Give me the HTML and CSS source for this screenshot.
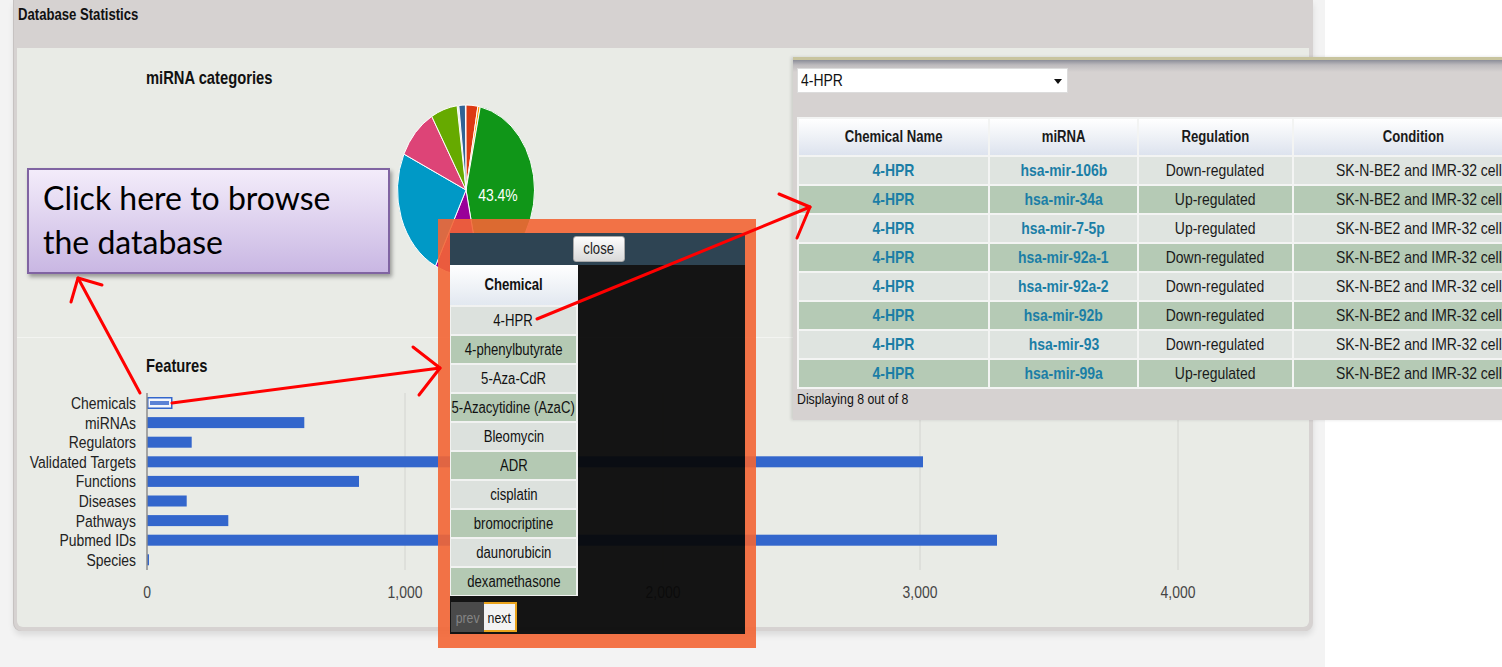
FILE: index.html
```html
<!DOCTYPE html>
<html>
<head>
<meta charset="utf-8">
<title>Database Statistics</title>
<link rel="stylesheet" href="styles.css">
</head>
<body>
<div class="page">
  <div class="panel">
    <div class="panel-head"><span class="sq sq-l">Database Statistics</span></div>
    <div class="panel-body">
      <div class="chart chart-pie">
        <svg class="chart-svg" width="1292" height="290" viewBox="0 0 1292 290">
          <text class="chart-title" x="129" y="36">miRNA categories</text>
          <g class="pie" transform="translate(449 142) scale(0.806 1)">
            <path fill="#dc3912" d="M0,0 L0,-85 A85,85 0 0 1 14.76,-83.71 Z"/>
            <path fill="#ff9900" d="M0,0 L14.76,-83.71 A85,85 0 0 1 17.67,-83.14 Z"/>
            <path fill="#109618" d="M0,0 L17.67,-83.14 A85,85 0 0 1 17.38,83.21 Z"/>
            <path fill="#990099" d="M0,0 L17.38,83.21 A85,85 0 0 1 -37.93,76.07 Z"/>
            <path fill="#0099c6" d="M0,0 L-37.93,76.07 A85,85 0 0 1 -77.04,-35.92 Z"/>
            <path fill="#dd4477" d="M0,0 L-77.04,-35.92 A85,85 0 0 1 -42.5,-73.61 Z"/>
            <path fill="#66aa00" d="M0,0 L-42.5,-73.61 A85,85 0 0 1 -11.09,-84.27 Z"/>
            <path fill="#316395" d="M0,0 L-8.88,-84.53 A85,85 0 0 1 -0.74,-85 Z"/>
          </g>
          <text class="pie-label" x="481" y="153">43.4%</text>
        </svg>
      </div>
      <div class="chart chart-bars">
        <svg class="chart-svg" width="1292" height="288" viewBox="0 0 1292 288">
          <text class="chart-title" x="129" y="34">Features</text>
          <g class="grid">
            <line x1="388" y1="55" x2="388" y2="232"/>
            <line x1="646" y1="55" x2="646" y2="232"/>
            <line x1="903" y1="55" x2="903" y2="232"/>
            <line x1="1161" y1="55" x2="1161" y2="232"/>
          </g>
          <g class="bars">
            <rect class="bar-hl" x="130.75" y="59.75" width="24" height="10.5"/>
            <rect class="bar-hl-in" x="133" y="63" width="19" height="4"/>
            <rect x="130" y="79.1" width="157.3" height="11"/>
            <rect x="130" y="98.7" width="44.7" height="11"/>
            <rect x="130" y="118.3" width="776" height="11"/>
            <rect x="130" y="137.9" width="212" height="11"/>
            <rect x="130" y="157.5" width="39.7" height="11"/>
            <rect x="130" y="177.1" width="81.3" height="11"/>
            <rect x="130" y="196.7" width="850" height="11"/>
            <rect x="130" y="216.3" width="2" height="11"/>
          </g>
          <line class="axis" x1="130" y1="55" x2="130" y2="232"/>
          <g class="labels">
            <text x="119" y="71">Chemicals</text>
            <text x="119" y="90.6">miRNAs</text>
            <text x="119" y="110.2">Regulators</text>
            <text x="119" y="129.8">Validated Targets</text>
            <text x="119" y="149.4">Functions</text>
            <text x="119" y="169">Diseases</text>
            <text x="119" y="188.6">Pathways</text>
            <text x="119" y="208.2">Pubmed IDs</text>
            <text x="119" y="227.8">Species</text>
          </g>
          <g class="ticks">
            <text x="130" y="260">0</text>
            <text x="388" y="260">1,000</text>
            <text x="646" y="260">2,000</text>
            <text x="903" y="260">3,000</text>
            <text x="1161" y="260">4,000</text>
          </g>
        </svg>
      </div>
    </div>
  </div>
</div>

<div class="callout">Click here to browse the database</div>

<div class="result">
  <div class="select"><span class="sq sq-l">4-HPR</span><span class="caret"></span></div>
  <table class="result-table">
    <thead>
      <tr><th class="c1"><span class="sq">Chemical Name</span></th><th class="c2"><span class="sq">miRNA</span></th><th class="c3"><span class="sq">Regulation</span></th><th class="c4"><span class="sq">Condition</span></th></tr>
    </thead>
    <tbody>
      <tr><td class="lnk"><span class="sq">4-HPR</span></td><td class="lnk"><span class="sq">hsa-mir-106b</span></td><td><span class="sq">Down-regulated</span></td><td class="cond"><span class="sq">SK-N-BE2 and IMR-32 cells</span></td></tr>
      <tr><td class="lnk"><span class="sq">4-HPR</span></td><td class="lnk"><span class="sq">hsa-mir-34a</span></td><td><span class="sq">Up-regulated</span></td><td class="cond"><span class="sq">SK-N-BE2 and IMR-32 cells</span></td></tr>
      <tr><td class="lnk"><span class="sq">4-HPR</span></td><td class="lnk"><span class="sq">hsa-mir-7-5p</span></td><td><span class="sq">Up-regulated</span></td><td class="cond"><span class="sq">SK-N-BE2 and IMR-32 cells</span></td></tr>
      <tr><td class="lnk"><span class="sq">4-HPR</span></td><td class="lnk"><span class="sq">hsa-mir-92a-1</span></td><td><span class="sq">Down-regulated</span></td><td class="cond"><span class="sq">SK-N-BE2 and IMR-32 cells</span></td></tr>
      <tr><td class="lnk"><span class="sq">4-HPR</span></td><td class="lnk"><span class="sq">hsa-mir-92a-2</span></td><td><span class="sq">Down-regulated</span></td><td class="cond"><span class="sq">SK-N-BE2 and IMR-32 cells</span></td></tr>
      <tr><td class="lnk"><span class="sq">4-HPR</span></td><td class="lnk"><span class="sq">hsa-mir-92b</span></td><td><span class="sq">Down-regulated</span></td><td class="cond"><span class="sq">SK-N-BE2 and IMR-32 cells</span></td></tr>
      <tr><td class="lnk"><span class="sq">4-HPR</span></td><td class="lnk"><span class="sq">hsa-mir-93</span></td><td><span class="sq">Down-regulated</span></td><td class="cond"><span class="sq">SK-N-BE2 and IMR-32 cells</span></td></tr>
      <tr><td class="lnk"><span class="sq">4-HPR</span></td><td class="lnk"><span class="sq">hsa-mir-99a</span></td><td><span class="sq">Up-regulated</span></td><td class="cond"><span class="sq">SK-N-BE2 and IMR-32 cells</span></td></tr>
    </tbody>
  </table>
  <div class="result-foot"><span class="sq sq-l">Displaying 8 out of 8</span></div>
</div>

<div class="popup">
  <div class="popup-bar"><span class="close-btn"><span class="sq">close</span></span></div>
  <div class="popup-body">
    <div class="chem-list">
      <div class="chem-head"><span class="sq">Chemical</span></div>
      <div class="chem-row"><span class="sq">4-HPR</span></div>
      <div class="chem-row alt"><span class="sq">4-phenylbutyrate</span></div>
      <div class="chem-row"><span class="sq">5-Aza-CdR</span></div>
      <div class="chem-row alt"><span class="sq">5-Azacytidine (AzaC)</span></div>
      <div class="chem-row"><span class="sq">Bleomycin</span></div>
      <div class="chem-row alt"><span class="sq">ADR</span></div>
      <div class="chem-row"><span class="sq">cisplatin</span></div>
      <div class="chem-row alt"><span class="sq">bromocriptine</span></div>
      <div class="chem-row"><span class="sq">daunorubicin</span></div>
      <div class="chem-row alt"><span class="sq">dexamethasone</span></div>
    </div>
    <div class="pager"><span class="pg prev"><span class="sq">prev</span></span><span class="pg next"><span class="sq">next</span></span></div>
  </div>
</div>

<svg class="arrows" width="1502" height="667" viewBox="0 0 1502 667">
  <g fill="none" stroke="#ff0000" stroke-width="3" stroke-linecap="round" stroke-linejoin="round">
    <line x1="140" y1="393" x2="78" y2="278"/>
    <polyline points="71,302 78,278 102,285"/>
    <line x1="172" y1="403" x2="440" y2="368"/>
    <polyline points="413,347 440,368 419,395"/>
    <line x1="537" y1="319" x2="810" y2="207"/>
    <polyline points="779,194 810,207 797,238"/>
  </g>
</svg>
</body>
</html>
```

FILE: styles.css
```css
* { box-sizing: border-box; }

html, body {
  margin: 0;
  padding: 0;
}

body {
  width: 1502px;
  height: 667px;
  overflow: hidden;
  position: relative;
  background: #ffffff;
  font-family: "Liberation Sans", Arial, sans-serif;
  color: #222;
}

/* The source screenshot is horizontally squeezed: text is narrowed to 82% */
.sq {
  display: inline-block;
  white-space: nowrap;
  transform: scaleX(0.82);
}

.sq-l {
  transform-origin: 0 50%;
}

/* ---------- page & statistics panel ---------- */
.page {
  width: 1325px;
  height: 667px;
  background: #f3f3f3;
  padding-left: 14px;
}

.panel {
  width: 1299px;
  height: 631px;
  background: #d6d2d1;
  padding: 0 4px 4px 3px;
  border-radius: 0 0 8px 8px;
  box-shadow: -1px 0 0 #c6c2c1, 0 4px 6px rgba(0, 0, 0, 0.10);
}

.panel-head {
  height: 48px;
  padding: 6px 0 0 1px;
  font-size: 16px;
  font-weight: bold;
  line-height: 18px;
  color: #111;
}

.panel-body {
  height: 579px;
  background: #e9ebe6;
  border-radius: 0 0 6px 6px;
}

.chart-pie {
  height: 290px;
  border-bottom: 1px solid #f3f4f1;
}

.chart-bars {
  height: 288px;
}

.chart-svg {
  display: block;
  font-family: "Liberation Sans", Arial, sans-serif;
}

.chart-svg text {
  transform-box: fill-box;
  transform: scaleX(0.82);
}

.chart-title {
  font-size: 18px;
  font-weight: bold;
  fill: #111;
  transform-origin: 0 50%;
}

.pie path {
  stroke: #ffffff;
  stroke-width: 1;
  vector-effect: non-scaling-stroke;
}

.pie-label {
  font-size: 17px;
  fill: #ffffff;
  text-anchor: middle;
  transform-origin: 50% 50%;
}

.grid line {
  stroke: #d3d4d0;
  stroke-width: 1;
}

.axis {
  stroke: #8d8d8d;
  stroke-width: 1.5;
}

.bars rect {
  fill: #3366cc;
}

.bars .bar-hl {
  fill: #f4f6fb;
  stroke: #3366cc;
  stroke-width: 1.5;
}

.bars .bar-hl-in {
  fill: #5b82d5;
}

.labels text {
  font-size: 17px;
  fill: #222;
  text-anchor: end;
  transform-origin: 100% 50%;
}

.ticks text {
  font-size: 17px;
  fill: #444;
  text-anchor: middle;
  transform-origin: 50% 50%;
}

/* ---------- callout annotation ---------- */
.callout {
  position: absolute;
  left: 27px;
  top: 168px;
  width: 363px;
  height: 106px;
  padding: 6px 30px 0 14px;
  border: 2px solid #8064a2;
  background: linear-gradient(#f3ecfa, #c9b7e3);
  box-shadow: 2px 3px 4px rgba(0, 0, 0, 0.35);
  font-family: Lato, "Open Sans", sans-serif;
  font-size: 32px;
  line-height: 44px;
  color: #000;
}

/* ---------- result table overlay ---------- */
.result {
  position: absolute;
  left: 793px;
  top: 57px;
  width: 740px;
  height: 363px;
  padding: 8px 0 0 4px;
  border-top: 3px solid #c8c49e;
  background: linear-gradient(#8b8d98 0, #bdbabd 5px, #d6d2d1 12px, #d6d2d1 100%);
  box-shadow: -2px 0 3px rgba(0, 0, 0, 0.12);
}

.select {
  position: relative;
  width: 271px;
  height: 25px;
  padding-left: 3px;
  background: #ffffff;
  border: 1px solid #dcdcdc;
  font-size: 17px;
  line-height: 23px;
  color: #111;
}

.caret {
  position: absolute;
  right: 5px;
  top: 10px;
  width: 0;
  height: 0;
  border-left: 4px solid transparent;
  border-right: 4px solid transparent;
  border-top: 5px solid #111;
}

.result-table {
  margin-top: 24px;
  border-collapse: separate;
  border-spacing: 2px;
  background: #f3f4f3;
  table-layout: fixed;
  width: 737px;
}

.result-table th,
.result-table td {
  padding: 0;
  text-align: center;
  white-space: nowrap;
  overflow: hidden;
}

.result-table th {
  height: 36px;
  font-size: 16px;
  font-weight: bold;
  color: #1a1a1a;
  background: linear-gradient(#ffffff, #dde3ee);
}

.result-table .c1 { width: 189px; }
.result-table .c2 { width: 147px; }
.result-table .c3 { width: 153px; }
.result-table .c4 { width: 238px; }

.result-table td {
  height: 27px;
  font-size: 17px;
  color: #1a1a1a;
  background: #dfe4e0;
}

.result-table td.cond {
  padding-left: 18px;
}

.result-table tbody tr:nth-child(even) td {
  background: #b5cab5;
}

.result-table td.lnk {
  color: #1b7ea6;
  font-weight: bold;
}

.result-foot {
  margin-top: 1px;
  font-size: 15px;
  line-height: 18px;
  color: #111;
}

/* ---------- chemical popup overlay ---------- */
.popup {
  position: absolute;
  left: 438px;
  top: 219px;
  width: 318px;
  height: 429px;
  display: flex;
  flex-direction: column;
  border-style: solid;
  border-width: 14px 11px 14px 12px;
  border-color: rgba(243, 101, 52, 0.9);
}

.popup-bar {
  height: 32px;
  display: flex;
  align-items: center;
  justify-content: center;
  padding-left: 3px;
  background: #2e4453;
}

.close-btn {
  display: flex;
  align-items: center;
  justify-content: center;
  width: 52px;
  height: 26px;
  border: 1px solid #a9a9a9;
  border-radius: 3px;
  background: linear-gradient(#fdfdfd, #d9d9d9);
  font-size: 16px;
  color: #222;
}

.popup-body {
  flex: 1;
  background: rgba(8, 8, 8, 0.95);
}

.chem-list {
  width: 128px;
  padding: 0 2px 1px 1px;
  background: #f1f2f1;
}

.chem-head {
  display: flex;
  align-items: center;
  justify-content: center;
  height: 40px;
  margin: 0 -2px 0 -1px;
  font-size: 16px;
  font-weight: bold;
  color: #111;
  background: linear-gradient(#ffffff, #e2e8f0);
}

.chem-row {
  display: flex;
  align-items: center;
  justify-content: center;
  height: 27px;
  margin-top: 2px;
  font-size: 16px;
  color: #111;
  background: #dce1dd;
}

.chem-row.alt {
  background: #b4c9b3;
}

.pager {
  display: flex;
  height: 30px;
  margin-top: 6px;
  padding-left: 1px;
}

.pg {
  display: flex;
  align-items: center;
  justify-content: center;
  width: 33px;
  font-size: 15px;
}

.pg.prev {
  background: #4a4a4a;
  color: #858585;
}

.pg.next {
  background: #f3f3f3;
  color: #111;
  border: 2px solid #e9a31c;
  border-left: none;
}

/* ---------- red annotation arrows ---------- */
.arrows {
  position: absolute;
  left: 0;
  top: 0;
  pointer-events: none;
}
```
